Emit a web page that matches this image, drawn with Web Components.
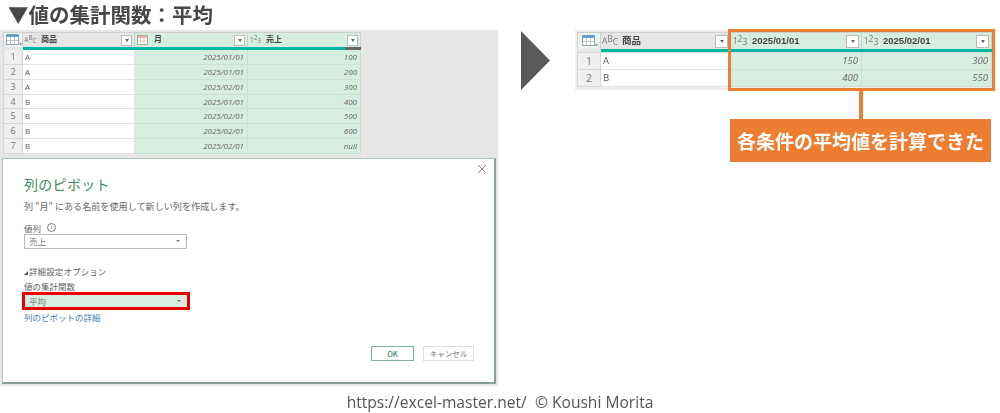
<!DOCTYPE html>
<html lang="ja">
<head>
<meta charset="utf-8">
<title>値の集計関数</title>
<style>
  html, body { margin: 0; padding: 0; background: #fff; }
  body { width: 1000px; height: 413px; overflow: hidden; font-family: "Noto Sans CJK JP", sans-serif; }
  .page { display: flex; flex-direction: column; filter: blur(.35px); }
  .main { display: flex; align-items: flex-start; }
</style>
</head>
<body>
<div class="page">
  <sheet-title>▼値の集計関数：平均</sheet-title>
  <div class="main">
    <gray-panel>
      <pq-table id="before" index-width="20" head-height="15" row-height="14.85"></pq-table>
      <pivot-dialog></pivot-dialog>
    </gray-panel>
    <next-arrow></next-arrow>
    <result-block>
      <pq-table id="after" index-width="24" head-height="17" row-height="16.8" big></pq-table>
      <span slot="note">各条件の平均値を計算できた</span>
    </result-block>
  </div>
  <page-footer>https://excel-master.net/&nbsp; © Koushi Morita</page-footer>
</div>

<script>
const JP = '"Open Sans", "Noto Sans CJK JP", sans-serif';

class SheetTitle extends HTMLElement {
  constructor() {
    super();
    this.attachShadow({ mode: 'open' });
    this.shadowRoot.innerHTML = `
      <style>
      :host { display: block; height: 30px; padding-left: 8px; box-sizing: border-box;
        font: 700 20.5px/29px "Noto Sans CJK JP", sans-serif; color: #474747; white-space: nowrap; }
      </style>
      <slot></slot>`;
  }
}
customElements.define('sheet-title', SheetTitle);

const tableIcon = `<svg width="17" height="14" viewBox="0 0 17 14">
  <rect x="1.5" y="1.5" width="12" height="10" fill="#fff" stroke="#9aa3ab"/>
  <rect x="1.5" y="1.5" width="12" height="2.4" fill="#5b9bd5"/>
  <path d="M5.5 4v7M9.5 4v7M2 7.5h11" stroke="#c2c8cd" fill="none"/>
  <path d="M14 10.5h3l-1.5 1.6z" fill="#555"/></svg>`;
const dateIcon = `<svg width="12" height="11" viewBox="0 0 12 11">
  <rect x=".5" y=".5" width="10" height="9" fill="#fff" stroke="#a7a7a7"/>
  <rect x="1" y="1" width="9" height="2" fill="#e6b8a0"/>
  <path d="M3.5 3v6M7 3v6M1 6h9" stroke="#e2c8b8" fill="none"/></svg>`;

const gridTemplate = document.createElement('template');
gridTemplate.innerHTML = `
  <style>
  :host { display: block; font-family: ${JP}; color: #5a5a5a; }
  .grid { display: grid; }
  .corner, .head { background: #e6e6e6; border-right: 1px solid #cfcfcf; border-top: 1px solid #d0d0d0;
    box-sizing: border-box; display: flex; align-items: center; height: var(--head); }
  .corner { justify-content: center; background: #e9f3f0; border-left: 1px solid #cfcfcf; }
  .head.sel { background: #d5eee0; }
  .head { padding: 0 2px; gap: 5px; }
  .label { flex: 1; font: 700 var(--label)/1 "Liberation Sans", "Noto Sans CJK JP", sans-serif; color: #444; white-space: nowrap; }
  .type { color: #777; font-size: var(--type); width: var(--type-w); line-height: 1; white-space: nowrap; display: flex; flex: none; justify-content: center; }
  .type i { font-style: normal; position: relative; top: -2px; }
  .type b { font-weight: 400; position: relative; top: 1px; }
  .btn { width: var(--btn); height: var(--btn); border: 1px solid #bdbdbd; background: #fff; box-sizing: border-box;
    display: flex; align-items: center; justify-content: center; flex: none; }
  .btn::after { content: ""; border: 2.5px solid transparent; border-top: 3px solid #666; border-bottom: 0; }
  .bar { height: 3px; background: #00b8a2; }
  .bar.part { background: linear-gradient(90deg, #00b8a2 86%, #666 86%); }
  .gap { height: var(--gap); background: #d9d9d9; grid-column: 1 / -1; }
  .num { background: #efefef; border: 1px solid #d6d6d6; border-top: 0; text-align: center; color: #777;
    font-size: var(--num); box-sizing: border-box; height: var(--row); line-height: var(--row); }
  .cell { background: #fff; border-right: 1px solid #e3e3e3; border-bottom: 1px solid #e3e3e3; box-sizing: border-box;
    height: var(--row); line-height: calc(var(--row) - 1px); padding: 0 3px 0 2px; font-size: var(--cell); white-space: nowrap; overflow: hidden; }
  .cell.sel { background: #d5eee0; border-color: #c9e0d3; text-align: right; font-style: italic; color: #666; }
  </style>
  <div class="grid"></div>
`;

class PqTable extends HTMLElement {
  constructor() {
    super();
    this.attachShadow({ mode: 'open' });
    this.shadowRoot.appendChild(gridTemplate.content.cloneNode(true));
    this.$grid = this.shadowRoot.querySelector('.grid');
  }

  set data({ columns, rows }) {
    const big = this.hasAttribute('big');
    const index = this.getAttribute('index-width');
    const vars = {
      '--head': this.getAttribute('head-height') + 'px',
      '--row': this.getAttribute('row-height') + 'px',
      '--label': big ? '9.5px' : '8px',
      '--cell': big ? '9.5px' : '8px',
      '--num': big ? '10.5px' : '9px',
      '--type': big ? '8.5px' : '6.5px',
      '--type-w': big ? '14px' : '11px',
      '--btn': big ? '13px' : '11px',
      '--gap': big ? '1px' : '0'
    };
    for (const name in vars) this.style.setProperty(name, vars[name]);
    this.$grid.style.gridTemplateColumns = index + 'px ' + columns.map(c => c.width + 'px').join(' ');

    const typeIcon = { abc: '<span class="type">A<i>B</i><b>C</b></span>', num: '<span class="type">1<i>2</i><b>3</b></span>', date: dateIcon };
    let html = `<div class="corner">${tableIcon}</div>`;
    html += columns.map(c => `<div class="head ${c.sel ? 'sel' : ''}">${typeIcon[c.type]}<span class="label">${c.label}</span><span class="btn"></span></div>`).join('');
    html += `<div class="bar" style="background:#e6e6e6"></div>`;
    html += columns.map(c => `<div class="bar ${c.part ? 'part' : ''}"></div>`).join('');
    html += `<div class="gap"></div>`;
    rows.forEach((row, i) => {
      html += `<div class="num">${i + 1}</div>`;
      html += row.map((v, j) => `<div class="cell ${columns[j].sel ? 'sel' : ''}">${v}</div>`).join('');
    });
    this.$grid.innerHTML = html;
  }
}
customElements.define('pq-table', PqTable);

class GrayPanel extends HTMLElement {
  constructor() {
    super();
    this.attachShadow({ mode: 'open' });
    this.shadowRoot.innerHTML = `
      <style>
      :host { display: flex; flex-direction: column; width: 498px; height: 356px; box-sizing: border-box;
        background: #e6e6e6; padding: 2px 2px 1px; flex: none; }
      ::slotted(pq-table) { margin-left: 1px; }
      ::slotted(pivot-dialog) { margin-top: 4px; }
      </style>
      <slot></slot>`;
  }
}
customElements.define('gray-panel', GrayPanel);

class DropSelect extends HTMLElement {
  constructor() {
    super();
    this.attachShadow({ mode: 'open' });
    this.shadowRoot.innerHTML = `
      <style>
      :host { display: flex; align-items: center; justify-content: space-between; box-sizing: border-box;
        width: 163px; height: 15px; padding: 0 6px 0 4px; border: 1px solid #bbb; background: #fff;
        font-size: 8.5px; color: #777; }
      :host([picked]) { background: #d5eee0; border: 0; width: 162px; height: 12px; }
      span { border: 2px solid transparent; border-top: 2.5px solid #777; border-bottom: 0; }
      </style>
      <slot></slot><span></span>`;
  }
}
customElements.define('drop-select', DropSelect);

class PivotDialog extends HTMLElement {
  constructor() {
    super();
    this.attachShadow({ mode: 'open' });
    this.shadowRoot.innerHTML = `
      <style>
      :host { display: block; position: relative; box-sizing: border-box; width: 494px; height: 226px;
        background: #fff; border: 1px solid #a9c4b4; border-right: 2px solid #8aa093; border-bottom: 2px solid #8aa093;
        padding: 15px 21px 0; font-family: "Noto Sans CJK JP", sans-serif; font-size: 8.5px; color: #666; }
      h1 { margin: 0; font: 400 14px/20px "Noto Sans CJK JP", sans-serif; color: #3f8a66; letter-spacing: .3px; }
      .line { line-height: 12px; white-space: nowrap; }
      .desc { margin-top: 6px; font-size: 9.1px; }
      .cols { margin-top: 10px; display: flex; align-items: center; gap: 6px; }
      .info { width: 7px; height: 7px; border: 1px solid #777; border-radius: 50%; font: 6px/7px "Open Sans", sans-serif; text-align: center; }
      .adv { margin-top: 16px; letter-spacing: .1px; }
      .adv::before { content: ""; display: inline-block; border-left: 4px solid transparent; border-bottom: 4px solid #555; margin-right: 1px; }
      .agg { margin-top: 3px; }
      .red { width: 168px; height: 18px; box-sizing: border-box; border: 3px solid #e80000; margin: 0 0 0 -2px; }
      .more { color: #4a7db5; margin-top: 1px; }
      .close { position: absolute; right: 7px; top: 5px; }
      .actions { position: absolute; left: 368px; top: 187px; display: flex; gap: 9px; }
      .ok, .cancel { height: 15px; box-sizing: border-box; display: flex; align-items: center; justify-content: center; font-size: 7.5px; background: #fff; }
      .ok { width: 43px; border: 1.5px solid #7fb298; color: #3f8a66; font-weight: 500; }
      .cancel { width: 51px; border: 1.5px solid #ddd; color: #777; }
      </style>
      <svg class="close" width="10" height="10" viewBox="0 0 10 10"><path d="M1 1l8 8M9 1l-8 8" stroke="#8a8a8a" fill="none"/></svg>
      <h1>列のピボット</h1>
      <div class="line desc">列 "月" にある名前を使用して新しい列を作成します。</div>
      <div class="line cols">値列 <span class="info">i</span></div>
      <drop-select>売上</drop-select>
      <div class="line adv">詳細設定オプション</div>
      <div class="line agg">値の集計関数</div>
      <div class="red"><drop-select picked>平均</drop-select></div>
      <div class="line more">列のピボットの詳細</div>
      <div class="actions"><div class="ok">OK</div><div class="cancel">キャンセル</div></div>`;
  }
}
customElements.define('pivot-dialog', PivotDialog);

class NextArrow extends HTMLElement {
  constructor() {
    super();
    this.attachShadow({ mode: 'open' });
    this.shadowRoot.innerHTML = `
      <style>:host { display: block; flex: none; margin: 1px 25px 0 23px; width: 29px; height: 59px; } svg { display: block; }</style>
      <svg width="29" height="59" viewBox="0 0 29 59"><path d="M0 0L29 29.5L0 59z" fill="#595959"/></svg>`;
  }
}
customElements.define('next-arrow', NextArrow);

class ResultBlock extends HTMLElement {
  constructor() {
    super();
    this.attachShadow({ mode: 'open' });
    this.shadowRoot.innerHTML = `
      <style>
      :host { display: block; flex: none; width: 421px; }
      .sheet { position: relative; box-sizing: border-box; height: 60px; padding: 2px; background: #eee; }
      .mark { position: absolute; left: 153px; top: -1px; width: 267px; height: 62px; box-sizing: border-box; border: 3.5px solid #ed7d31; }
      .stem { width: 4px; height: 28px; margin: 1px 0 0 284px; background: #ed7d31; }
      .note { margin-left: 155px; width: 261px; height: 43px; box-sizing: border-box; background: #ed7d31; color: #fff;
        font: 700 19px/43px "Noto Sans CJK JP", sans-serif; text-align: center; white-space: nowrap; }
      </style>
      <div class="sheet"><slot></slot><div class="mark"></div></div>
      <div class="stem"></div>
      <div class="note"><slot name="note"></slot></div>`;
  }
}
customElements.define('result-block', ResultBlock);

class PageFooter extends HTMLElement {
  constructor() {
    super();
    this.attachShadow({ mode: 'open' });
    this.shadowRoot.innerHTML = `
      <style>
      :host { display: block; margin-top: 6px; text-align: center; white-space: nowrap;
        font: 15.6px/20px "Open Sans", sans-serif; color: #555; }
      </style>
      <slot></slot>`;
  }
}
customElements.define('page-footer', PageFooter);

document.getElementById('before').data = {
  columns: [
    { type: 'abc', label: '商品', width: 112 },
    { type: 'date', label: '月', width: 113, sel: true },
    { type: 'num', label: '売上', width: 113, sel: true, part: true }
  ],
  rows: [
    ['A', '2025/01/01', '100'], ['A', '2025/01/01', '200'], ['A', '2025/02/01', '300'],
    ['B', '2025/01/01', '400'], ['B', '2025/02/01', '500'], ['B', '2025/02/01', '600'],
    ['B', '2025/02/01', 'null']
  ]
};
document.getElementById('after').data = {
  columns: [
    { type: 'abc', label: '商品', width: 130 },
    { type: 'num', label: '2025/01/01', width: 131, sel: true },
    { type: 'num', label: '2025/02/01', width: 130, sel: true }
  ],
  rows: [['A', '150', '300'], ['B', '400', '550']]
};
</script>
</body>
</html>
